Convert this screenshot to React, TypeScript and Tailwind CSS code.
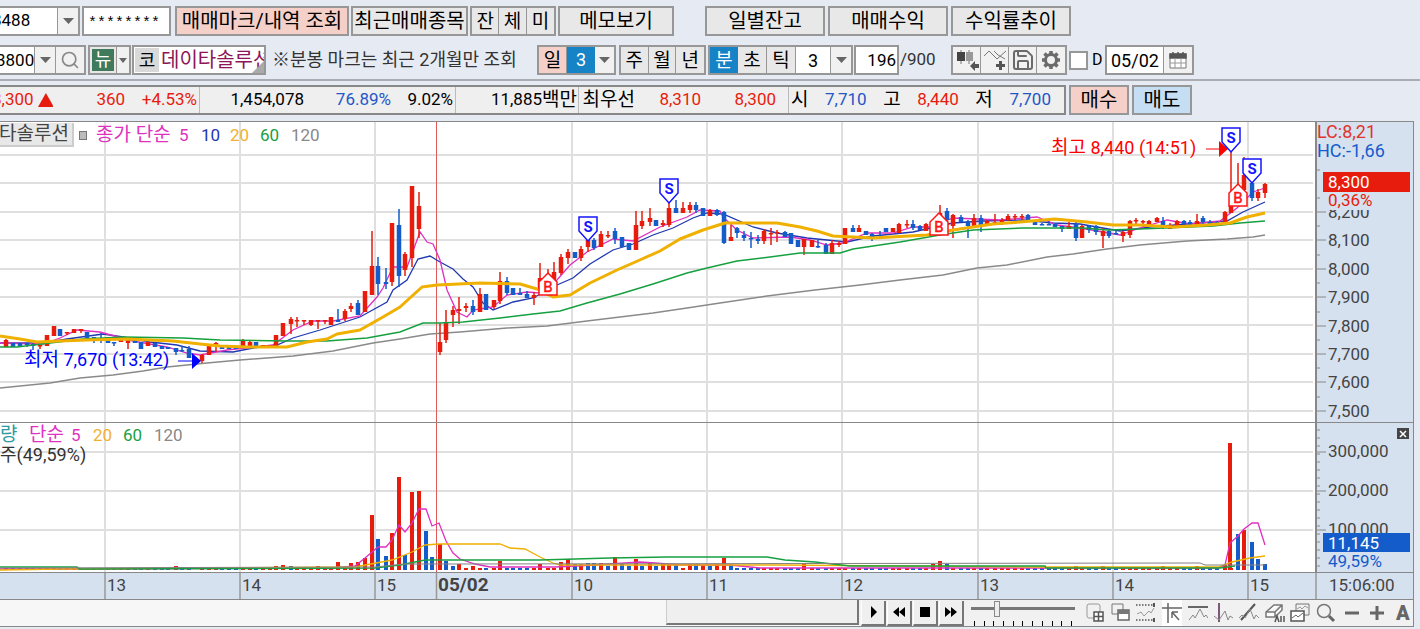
import React from 'react';
import { Search, Save } from 'lucide-react';

type Tone = 'r' | 'b';
// x, high, body top, body bottom, low, direction
type Candle = [number, number, number, number, number, Tone];

const RED = '#e81c0c';
const BLUE = '#155ccb';

const candles: Candle[] = [
  [6, 339, 340, 347, 347, 'r'], [13, 343, 343, 347, 347, 'b'], [20, 343, 343, 346, 346, 'b'], [27, 343, 343, 345, 347, 'b'],
  [33, 343, 344, 346, 350, 'b'], [40, 345, 345, 346, 349, 'r'], [47, 335, 335, 346, 346, 'r'], [54, 326, 326, 336, 336, 'r'],
  [60, 329, 329, 336, 336, 'b'], [67, 332, 332, 333, 335, 'r'], [74, 329, 329, 333, 333, 'r'], [81, 329, 329, 331, 333, 'r'],
  [87, 332, 332, 338, 338, 'b'], [94, 337, 337, 338, 343, 'b'], [101, 333, 338, 339, 343, 'b'], [108, 337, 337, 343, 343, 'b'],
  [114, 342, 342, 343, 346, 'b'], [121, 338, 338, 342, 342, 'r'], [128, 338, 339, 343, 349, 'r'], [135, 340, 340, 343, 343, 'b'],
  [141, 342, 342, 349, 349, 'b'], [148, 342, 342, 346, 346, 'r'], [155, 343, 343, 347, 347, 'b'], [162, 346, 346, 349, 349, 'b'],
  [168, 347, 347, 349, 349, 'b'], [176, 348, 348, 352, 355, 'b'], [182, 346, 350, 351, 352, 'b'], [189, 346, 349, 358, 358, 'b'],
  [202, 354, 355, 361, 363, 'r'], [209, 345, 345, 355, 355, 'r'], [216, 342, 343, 344, 352, 'r'], [222, 346, 346, 349, 349, 'b'],
  [229, 346, 346, 349, 349, 'b'], [236, 346, 346, 349, 349, 'b'], [243, 339, 340, 347, 347, 'r'], [250, 340, 342, 347, 347, 'r'],
  [256, 342, 342, 348, 348, 'b'], [263, 345, 345, 348, 348, 'r'], [270, 345, 345, 348, 348, 'r'], [276, 335, 335, 346, 346, 'r'],
  [283, 323, 323, 336, 336, 'r'], [291, 317, 319, 324, 334, 'r'], [297, 317, 320, 321, 327, 'r'], [304, 320, 320, 321, 325, 'r'],
  [311, 320, 320, 325, 326, 'r'], [318, 320, 320, 321, 329, 'r'], [325, 320, 320, 321, 324, 'r'], [331, 317, 317, 325, 325, 'r'],
  [338, 309, 320, 322, 322, 'b'], [345, 309, 311, 319, 321, 'r'], [351, 303, 306, 309, 312, 'r'], [358, 300, 303, 315, 315, 'b'],
  [365, 291, 291, 312, 312, 'r'], [372, 231, 266, 295, 295, 'r'], [378, 257, 266, 284, 295, 'b'], [386, 268, 282, 284, 289, 'b'],
  [392, 223, 223, 282, 286, 'r'], [399, 209, 225, 276, 287, 'b'], [405, 252, 254, 270, 276, 'r'], [412, 186, 186, 258, 267, 'r'],
  [419, 192, 206, 229, 238, 'r'],
  [440, 323, 342, 352, 355, 'r'], [446, 310, 322, 340, 343, 'r'], [453, 306, 310, 315, 327, 'r'], [459, 297, 309, 311, 324, 'r'],
  [466, 303, 306, 308, 312, 'r'], [473, 300, 306, 312, 315, 'b'], [480, 288, 294, 312, 312, 'r'], [486, 294, 294, 310, 310, 'b'],
  [494, 300, 300, 307, 309, 'r'], [500, 272, 281, 301, 304, 'r'], [507, 277, 281, 293, 295, 'b'], [513, 288, 288, 295, 295, 'b'],
  [520, 288, 293, 295, 295, 'b'], [527, 291, 294, 298, 298, 'b'], [534, 292, 295, 298, 305, 'r'], [540, 263, 278, 291, 291, 'r'],
  [548, 269, 274, 280, 280, 'r'], [554, 262, 272, 280, 280, 'r'], [561, 254, 257, 273, 275, 'r'], [568, 249, 252, 258, 264, 'r'],
  [575, 252, 252, 258, 258, 'b'], [581, 246, 249, 258, 261, 'r'], [588, 238, 240, 247, 252, 'r'], [594, 238, 240, 248, 250, 'b'],
  [601, 231, 234, 247, 247, 'r'], [608, 231, 235, 236, 238, 'r'], [615, 228, 231, 239, 244, 'b'], [622, 237, 237, 247, 247, 'b'],
  [629, 243, 243, 250, 250, 'b'], [636, 211, 225, 250, 250, 'r'], [642, 211, 221, 226, 229, 'r'], [650, 208, 218, 222, 226, 'r'],
  [656, 220, 220, 226, 226, 'b'], [663, 220, 223, 225, 227, 'r'], [669, 202, 208, 225, 227, 'r'], [676, 200, 208, 213, 213, 'b'],
  [683, 202, 208, 213, 213, 'r'], [690, 202, 205, 210, 213, 'r'], [696, 202, 205, 210, 213, 'b'], [703, 208, 208, 216, 216, 'b'],
  [710, 209, 210, 216, 216, 'r'], [717, 209, 210, 215, 216, 'b'], [724, 211, 212, 243, 244, 'b'], [731, 225, 237, 241, 241, 'r'],
  [737, 227, 228, 233, 238, 'b'], [744, 231, 235, 238, 241, 'b'], [751, 232, 238, 239, 248, 'b'], [758, 235, 239, 241, 244, 'b'],
  [764, 229, 231, 241, 244, 'r'], [771, 228, 233, 234, 245, 'r'], [777, 230, 232, 233, 242, 'r'], [785, 231, 232, 237, 237, 'b'],
  [791, 233, 233, 244, 244, 'b'], [798, 240, 240, 247, 247, 'b'], [804, 239, 239, 247, 255, 'r'], [812, 240, 240, 247, 247, 'r'],
  [818, 240, 246, 247, 248, 'b'], [826, 243, 245, 254, 254, 'b'], [832, 240, 243, 254, 254, 'r'], [839, 241, 243, 245, 247, 'r'],
  [845, 228, 228, 244, 244, 'r'], [853, 225, 228, 232, 232, 'b'], [859, 225, 228, 232, 232, 'r'], [866, 231, 231, 235, 235, 'b'],
  [872, 233, 234, 238, 241, 'b'], [880, 231, 237, 238, 239, 'b'], [886, 228, 228, 232, 232, 'b'], [893, 228, 228, 232, 232, 'r'],
  [899, 223, 224, 233, 233, 'r'], [907, 220, 224, 225, 228, 'r'], [913, 220, 224, 228, 230, 'b'], [920, 225, 226, 230, 230, 'b'],
  [926, 223, 224, 231, 231, 'r'], [933, 224, 225, 230, 230, 'r'], [940, 205, 213, 225, 228, 'r'], [947, 208, 211, 220, 222, 'b'],
  [953, 214, 215, 226, 238, 'r'], [961, 215, 217, 222, 222, 'b'], [968, 220, 221, 226, 238, 'b'], [974, 214, 218, 226, 228, 'r'],
  [981, 215, 218, 226, 232, 'b'], [987, 220, 221, 226, 226, 'r'], [995, 214, 222, 223, 225, 'r'], [1002, 218, 220, 222, 225, 'r'],
  [1008, 214, 216, 220, 221, 'r'], [1015, 214, 216, 217, 220, 'r'], [1022, 214, 216, 217, 220, 'r'], [1028, 214, 215, 220, 221, 'b'],
  [1035, 220, 221, 225, 225, 'b'], [1042, 223, 224, 225, 225, 'b'], [1049, 221, 224, 225, 225, 'b'], [1055, 223, 224, 227, 227, 'b'],
  [1062, 226, 226, 229, 232, 'b'], [1069, 222, 226, 229, 229, 'r'], [1076, 222, 224, 238, 241, 'b'], [1082, 225, 226, 238, 238, 'r'],
  [1089, 225, 226, 230, 233, 'b'], [1096, 225, 226, 232, 235, 'b'], [1103, 228, 231, 236, 248, 'r'], [1109, 230, 231, 236, 238, 'b'],
  [1116, 231, 233, 234, 235, 'b'], [1123, 231, 232, 236, 242, 'r'], [1130, 220, 221, 235, 238, 'r'], [1136, 218, 220, 221, 225, 'r'],
  [1143, 220, 221, 222, 227, 'r'], [1149, 220, 221, 225, 225, 'r'], [1157, 217, 218, 222, 222, 'r'], [1163, 217, 221, 228, 229, 'b'],
  [1170, 223, 225, 229, 229, 'r'], [1177, 220, 221, 226, 227, 'r'], [1184, 220, 221, 224, 224, 'b'], [1190, 220, 222, 226, 226, 'b'],
  [1197, 214, 221, 226, 227, 'r'], [1203, 216, 218, 222, 224, 'b'], [1210, 220, 222, 224, 225, 'b'], [1217, 221, 222, 225, 225, 'b'],
  [1225, 211, 212, 223, 223, 'r'], [1231, 152, 206, 213, 213, 'r'], [1238, 163, 186, 200, 200, 'r'], [1244, 157, 175, 190, 190, 'r'],
  [1252, 182, 183, 198, 201, 'b'], [1258, 189, 192, 198, 201, 'r'], [1265, 183, 184, 193, 198, 'r'],
];

// tops of the volume bars that rise above the floor, [x, top, colour]
const spikes: [number, number, Tone][] = [
  [176, 566, 'r'], [276, 566, 'r'], [283, 565, 'r'], [291, 566, 'b'], [318, 566, 'r'], [338, 562, 'r'], [351, 563, 'r'],
  [358, 562, 'r'], [365, 558, 'r'], [372, 515, 'r'], [378, 539, 'b'], [386, 556, 'b'], [392, 533, 'r'], [399, 477, 'r'],
  [405, 555, 'b'], [412, 492, 'r'], [419, 491, 'r'], [426, 531, 'b'], [432, 557, 'b'], [440, 544, 'r'], [446, 561, 'b'],
  [453, 566, 'b'], [459, 564, 'r'], [473, 566, 'r'], [500, 561, 'r'], [540, 564, 'r'], [561, 562, 'r'], [568, 559, 'r'],
  [575, 564, 'b'], [581, 564, 'r'], [588, 563, 'b'], [594, 563, 'b'], [601, 563, 'r'], [608, 566, 'b'], [615, 557, 'r'],
  [622, 564, 'b'], [629, 566, 'b'], [636, 559, 'r'], [642, 566, 'b'], [650, 562, 'r'], [656, 566, 'b'], [663, 563, 'r'],
  [669, 564, 'r'], [676, 564, 'b'], [690, 564, 'r'], [696, 564, 'b'], [703, 565, 'r'], [710, 566, 'b'], [717, 564, 'r'],
  [724, 558, 'r'], [731, 565, 'b'], [804, 564, 'r'], [933, 564, 'r'], [940, 561, 'r'], [947, 564, 'b'], [1076, 566, 'r'],
  [1103, 566, 'r'], [1163, 566, 'r'], [1197, 566, 'r'], [1225, 565, 'r'], [1230, 443, 'r'], [1238, 534, 'b'],
  [1244, 530, 'r'], [1252, 542, 'b'], [1258, 559, 'b'], [1265, 564, 'b'],
];

const ma120 =
  '0,388 50,383 80,378 113,375 143,371 167,367 207,363 240,360 293,356 333,351 373,343 400,339 430,334 460,332 507,328 547,326 587,321 620,317 653,313 687,308 720,303 767,296 815,290 860,285 900,280 943,275 977,268 1007,265 1047,257 1073,254 1107,249 1140,245 1187,241 1227,239 1253,237 1265,235';
const ma60 =
  '0,347 17,347 50,343 83,339 123,337 183,338 220,340 287,341 327,341 367,338 400,332 423,323 440,323 463,322 500,318 533,314 560,311 587,303 620,294 653,284 687,273 707,268 737,261 770,257 800,253 840,253 853,249 900,242 940,235 973,230 1023,228 1083,228 1107,230 1140,229 1213,226 1240,223 1265,221';
const ma20 =
  '0,336 20,339 37,342 60,341 87,340 127,339 173,341 200,344 220,346 247,347 287,347 307,342 327,339 337,334 360,330 383,317 400,307 422,287 437,285 480,283 520,284 537,289 553,297 570,295 590,283 617,270 633,263 660,251 680,239 703,230 725,223 777,223 800,227 817,231 833,236 873,238 927,235 953,230 993,224 1020,222 1055,219 1087,222 1113,225 1140,225 1173,227 1207,225 1230,223 1247,217 1265,213';
const ma10 =
  '0,343 43,343 67,339 103,334 123,337 150,342 177,345 200,351 233,352 253,348 277,345 293,338 320,330 360,317 387,302 393,290 407,280 418,259 430,256 440,262 453,269 463,279 473,287 483,303 493,310 513,302 533,298 557,285 573,278 590,264 613,250 633,244 653,235 673,228 693,218 707,213 723,214 753,227 777,233 807,238 847,242 873,236 913,232 953,223 983,221 1023,220 1053,223 1080,224 1097,227 1120,231 1150,227 1200,223 1227,221 1243,212 1265,202';
const ma5 =
  '0,343 43,344 60,338 77,330 100,332 133,341 167,347 187,353 200,355 227,350 273,345 293,330 313,321 333,321 360,316 377,297 383,288 393,267 407,267 420,232 427,242 433,244 440,260 447,290 457,312 467,317 473,310 493,307 507,295 527,292 540,293 557,280 570,265 587,252 613,239 633,241 660,227 687,217 700,210 720,211 723,217 737,230 753,238 790,237 810,240 827,245 843,243 867,233 893,233 913,227 930,227 953,218 1000,220 1037,217 1057,225 1080,228 1103,232 1120,235 1140,228 1167,220 1190,224 1220,221 1237,208 1253,192 1265,188';

const hours = [
  { x: 105, label: '13' }, { x: 240, label: '14' }, { x: 375, label: '15' }, { x: 572, label: '10' }, { x: 707, label: '11' },
  { x: 842, label: '12' }, { x: 978, label: '13' }, { x: 1113, label: '14' }, { x: 1248, label: '15' },
];
const prices = ['8,200', '8,100', '8,000', '7,900', '7,800', '7,700', '7,600', '7,500'];

const button = 'h-[30px] shrink-0 border-2 border-[#979797] text-[20px] leading-none text-black whitespace-nowrap';
const segment = 'h-full w-[29px] border-r border-[#979797] last:border-r-0 text-[19px] leading-none text-black';
const group = 'flex h-[30px] shrink-0 border-2 border-[#979797] bg-[#e8e8e8]';
const iconBtn = 'flex h-full w-7 items-center justify-center border-r border-[#979797] bg-[#f1f1f1] last:border-r-0';

function Arrow() {
  return (
    <svg className="h-[6px] w-[11px]" viewBox="0 0 11 6">
      <path d="M0 0h11L5.500 6z" fill="#666" />
    </svg>
  );
}

function Combo({ value, label, className }: { value: string; label: string; className: string }) {
  return (
    <div className={`relative flex h-[30px] shrink-0 border-2 border-[#979797] bg-white ${className}`}>
      <select aria-label={label} defaultValue={value} className="h-full w-full appearance-none bg-transparent pl-2 text-[17px] text-black">
        <option>{value}</option>
      </select>
      <span className="pointer-events-none absolute inset-y-0 right-0 flex w-[21px] items-center justify-center border-l border-[#979797] bg-[#f1f1f1]">
        <Arrow />
      </span>
    </div>
  );
}

function TopRow() {
  return (
    <div className="flex items-center pt-[6px]">
      <Combo label="계좌" value="8488" className="-ml-[18px] w-[98px]" />
      <input
        aria-label="비밀번호"
        defaultValue="********"
        className="ml-[2px] h-[30px] w-[89px] shrink-0 border-2 border-[#979797] bg-white px-1 pt-1 font-['Liberation_Mono',monospace] text-[15px]"
      />
      <button className={`${button} ml-1 w-[174px] bg-[#f5d0c9]`}>매매마크/내역 조회</button>
      <button className={`${button} ml-[2px] w-[117px] bg-[#e8e8e8]`}>최근매매종목</button>
      <div className={`${group} ml-[2px] w-[86px]`}>
        <button className={segment}>잔</button>
        <button className={segment}>체</button>
        <button className={segment}>미</button>
      </div>
      <button className={`${button} ml-[2px] w-[116px] bg-[#e8e8e8]`}>메모보기</button>
      <button className={`${button} ml-[31px] w-[120px] bg-[#e8e8e8]`}>일별잔고</button>
      <button className={`${button} ml-[3px] w-[120px] bg-[#e8e8e8]`}>매매수익</button>
      <button className={`${button} ml-[3px] w-[120px] bg-[#e8e8e8]`}>수익률추이</button>
    </div>
  );
}

function SecondRow() {
  return (
    <div className="flex items-center pt-[9px] pb-1">
      <div className={`${group} -ml-[13px]`}>
        <input aria-label="종목코드" defaultValue="3800" className="h-full w-[46px] border-r border-[#979797] bg-white pl-[7px] text-[17px]" />
        <button aria-label="종목코드 목록" className="flex h-full w-[21px] items-center justify-center border-r border-[#979797] bg-[#f1f1f1]"><Arrow /></button>
        <button aria-label="검색" className={iconBtn}><Search className="h-5 w-5 text-[#888]" strokeWidth={2} /></button>
      </div>
      <div className={`${group} ml-[2px] w-[43px]`}>
        <button className="m-[2px] h-[22px] w-[22px] shrink-0 bg-[#3f7a5c] text-[18px] leading-none text-white">뉴</button>
        <button aria-label="뉴스 목록" className="flex w-full items-center justify-center border-l border-[#979797] bg-[#f1f1f1]">
          <svg className="h-[5px] w-2" viewBox="0 0 8 5"><path d="M0 0h8L4 5z" fill="#666" /></svg>
        </button>
      </div>
      <div className="relative ml-[1px] flex h-[30px] w-[134px] shrink-0 items-center overflow-hidden border-2 border-[#979797] bg-white">
        <span className="ml-[1px] flex h-6 w-6 shrink-0 items-center justify-center bg-[#d9d9d9] text-[18px]">코</span>
        <span className="ml-[2px] text-[20px] whitespace-nowrap text-[#8c1657]">데이타솔루션</span>
        <svg className="absolute right-0 bottom-0 h-3 w-3" viewBox="0 0 12 12"><path d="M12 0v12H0z" fill="#aaa" /></svg>
      </div>
      <span className="ml-[6px] w-[246px] shrink-0 text-[18px] leading-6 whitespace-nowrap text-[#333]">※분봉 마크는 최근 2개월만 조회</span>

      <div className={`${group} ml-[19px] w-[79px]`}>
        <button className="h-full w-7 border-r border-[#979797] bg-[#f5d0c9] text-[19px] leading-none">일</button>
        <button className="h-full w-7 bg-[#1583c5] text-[18px] leading-none text-white">3</button>
        <button aria-label="일 주기" className="flex h-full flex-1 items-center justify-center bg-[#f1f1f1]"><Arrow /></button>
      </div>
      <div className={`${group} ml-[3px] w-[87px]`}>
        <button className={segment}>주</button>
        <button className={segment}>월</button>
        <button className={segment}>년</button>
      </div>
      <div className={`${group} ml-[2px] w-[145px]`}>
        <button className="h-full w-7 bg-[#1583c5] text-[19px] leading-none text-white">분</button>
        <button className={segment}>초</button>
        <button className={segment}>틱</button>
        <input aria-label="분 주기" defaultValue="3" className="h-full w-[34px] min-w-0 bg-white text-center text-[18px]" />
        <button aria-label="분 주기 목록" className="flex h-full flex-1 items-center justify-center border-l border-[#979797] bg-[#f1f1f1]"><Arrow /></button>
      </div>
      <input aria-label="봉 개수" defaultValue="196" className="ml-[1px] h-[30px] w-[45px] shrink-0 border-2 border-[#979797] bg-white pr-[1px] text-right text-[17px]" />
      <span className="w-[52px] shrink-0 pl-[1px] text-[17px] text-[#333]">/900</span>

      <div className={group}>
        <button aria-label="캔들 이동" className={iconBtn}>
          <svg className="h-6 w-6" viewBox="0 0 24 24">
            <path d="M6 2v14M14 2v14" stroke="#777" />
            <path d="M2 4h8v9H2z" fill="#444" />
            <path d="M11 4h7v9h-7z" fill="#999" />
            <path d="M15 18l5-5v3h4v4h-4v3z" fill="#555" />
          </svg>
        </button>
        <button aria-label="지표 추가" className={iconBtn}>
          <svg className="h-6 w-6" viewBox="0 0 24 24" fill="none">
            <path d="M1 8l5-5 4 4 4 4 9-8M11 3l4 4 7 4" stroke="#777" />
            <path d="M17.500 13v9M13 17.500h9" stroke="#555" strokeWidth="3" />
          </svg>
        </button>
        <button aria-label="저장" className={iconBtn}><Save className="h-6 w-6 text-[#6b6b6b]" strokeWidth={2} /></button>
        <button aria-label="설정" className={iconBtn}>
          <svg className="h-5 w-5" viewBox="0 0 20 20" fill="none" stroke="#6b6b6b">
            <circle cx="10" cy="10" r="5.500" strokeWidth="3" />
            <path d="M10 1v3M10 16v3M1 10h3M16 10h3M3.500 3.500l2.500 2.500M14 14l2.500 2.500M3.500 16.500l2.500-2.500M14 6l2.500-2.500" strokeWidth="3.500" />
          </svg>
        </button>
      </div>
      <label className="ml-[2px] flex shrink-0 items-center">
        <input type="checkbox" className="h-[19px] w-[19px] appearance-none border-2 border-[#979797] bg-white" />
        <span className="ml-1 w-[13px] text-[16px]">D</span>
      </label>
      <div className={group}>
        <input aria-label="날짜" defaultValue="05/02" className="h-full w-[57px] border-r border-[#979797] bg-white pl-1 text-[18px]" />
        <button aria-label="달력" className={iconBtn}>
          <svg className="h-[18px] w-[18px]" viewBox="0 0 18 18" fill="none">
            <path d="M1 3h16v14H1z" fill="#fff" stroke="#777" />
            <path d="M1 3h16v4H1zM4 1v3M9 1v3M14 1v3" fill="#555" stroke="#555" strokeWidth="1.500" />
            <path d="M1 12h16M6 7v10M12 7v10" stroke="#999" />
          </svg>
        </button>
      </div>
    </div>
  );
}

function InfoRow() {
  const cell = 'flex h-full shrink-0 items-center justify-end border-r border-[#bbb]';
  const ko = 'text-[19px]';
  return (
    <div className="flex border-t-2 border-[#a9adb3] pt-1 pb-[6px]">
      <div className="flex h-[30px] w-[1066px] shrink-0 items-center border-y-2 border-r-2 border-[#888] bg-[#efefef] text-[17px]">
        <div className={`${cell} -ml-[8px] w-[208px] pr-[2px] text-[#e81c0c]`}>
          <span>8,300</span>
          <svg className="ml-1 h-[14px] w-4" viewBox="0 0 16 14"><path d="M8 0l8 14H0z" fill={RED} /></svg>
          <span className="w-[73px] text-right">360</span>
          <span className="w-[73px] text-right">+4.53%</span>
        </div>
        <div className={`${cell} w-[256px] pr-[2px]`}>
          <span>1,454,078</span>
          <span className="w-[87px] text-right text-[#2456c8]">76.89%</span>
          <span className="w-[62px] text-right">9.02%</span>
        </div>
        <div className={`${cell} w-[123px] pr-[1px]`}>
          11,885<span className={ko}>백만</span>
        </div>
        <div className={`${cell} w-[210px] pr-3`}>
          <span className={ko}>최우선</span>
          <span className="w-[66px] text-right text-[#e81c0c]">8,310</span>
          <span className="w-[75px] text-right text-[#e81c0c]">8,300</span>
        </div>
        <div className="flex h-full flex-1 items-center justify-between pr-[13px] pl-[2px]">
          <span className={ko}>시</span>
          <span className="text-[#2456c8]">7,710</span>
          <span className={ko}>고</span>
          <span className="text-[#e81c0c]">8,440</span>
          <span className={ko}>저</span>
          <span className="text-[#2456c8]">7,700</span>
        </div>
      </div>
      <button className={`${button} ml-[3px] w-[60px] bg-[#f5d0c9]`}>매수</button>
      <button className={`${button} ml-[3px] w-[60px] bg-[#c6def4]`}>매도</button>
    </div>
  );
}

function SellMark({ x, y }: { x: number; y: number }) {
  return (
    <g>
      <path d={`M${x - 9} ${y}h18v14l-9 10l-9-10z`} fill="#fff" stroke="#1414ff" strokeWidth="1.500" />
      <text x={x} y={y + 15} textAnchor="middle" fontSize="15" fontWeight="700" fill="#1414ff">S</text>
    </g>
  );
}

function BuyMark({ x, y }: { x: number; y: number }) {
  return (
    <g>
      <path d={`M${x} ${y}l9 9v13h-18v-13z`} fill="#fff" stroke="#ff1414" strokeWidth="1.500" />
      <text x={x} y={y + 19} textAnchor="middle" fontSize="15" fill="#ff1414" stroke="#ff1414" strokeWidth="0.500">B</text>
    </g>
  );
}

function Grid({ rows, top, bottom }: { rows: number[]; top: number; bottom: number }) {
  return (
    <g stroke="#dfdfdf" strokeWidth="2">
      {rows.map((y) => <line key={y} x1="0" x2="1313" y1={y} y2={y} />)}
      {hours.map((h) => <line key={h.x} x1={h.x} x2={h.x} y1={top} y2={bottom} />)}
    </g>
  );
}

function PricePlot() {
  const rows = Array.from({ length: 10 }, (_, i) => Math.round(155 + i * 28.4));
  return (
    <svg className="block h-auto w-full bg-white" viewBox="0 122 1315 300" fill="none">
      <Grid rows={rows} top={122} bottom={422} />
      <line x1="436.500" x2="436.500" y1="122" y2="422" stroke="#e05a5a" />
      <polyline points={ma120} stroke="#8a8a8a" strokeWidth="1.500" />
      <polyline points={ma10} stroke="#2038b0" strokeWidth="1.300" />
      <polyline points={ma5} stroke="#e030c0" strokeWidth="1.300" />
      {candles.map(([x, high, top, bottom, low, tone]) => (
        <g key={x} fill={tone === 'r' ? RED : BLUE}>
          <rect x={x - 0.75} y={high} width="1.500" height={low - high} />
          <rect x={x - 2.25} y={top} width="4.500" height={Math.max(bottom - top, 1.5)} />
        </g>
      ))}
      <polyline points={ma60} stroke="#16a040" strokeWidth="1.500" />
      <polyline points={ma20} stroke="#f0b000" strokeWidth="3" strokeLinejoin="round" />

      <text x="24" y="366" fontSize="18" fill="#0000ff"><tspan fontSize="19">최저</tspan> 7,670 (13:42)</text>
      <path d="M178 361h15" stroke="#0000ff" />
      <path d="M192 353l9 8l-9 8z" fill="#0000ff" />
      <text x="1051" y="154" fontSize="18" fill="#ff0000"><tspan fontSize="19">최고</tspan> 8,440 (14:51)</text>
      <path d="M1206 149h14" stroke="#ff0000" />
      <path d="M1219 141l9 8l-9 8z" fill="#ff0000" />

      <SellMark x={588} y={217} />
      <SellMark x={669} y={179} />
      <SellMark x={1231} y={128} />
      <BuyMark x={548} y={273} />
      <BuyMark x={939} y={213} />
      <BuyMark x={1238} y={184} />
      <SellMark x={1252} y={159} />
    </svg>
  );
}

function VolumePlot() {
  const tall = new Set(spikes.map((s) => s[0]));
  return (
    <svg className="block h-auto w-full bg-white" viewBox="0 423 1315 149" fill="none">
      <Grid rows={[452, 491, 530]} top={423} bottom={572} />
      <line x1="436.500" x2="436.500" y1="423" y2="572" stroke="#e05a5a" />
      {candles.filter((c) => !tall.has(c[0])).map((c) => (
        <rect key={c[0]} x={c[0] - 2} y="568" width="4" height="2" fill={c[5] === 'r' ? RED : BLUE} />
      ))}
      {spikes.map(([x, top, tone]) => (
        <rect key={x} x={x - 2} y={top} width="4" height={570 - top} fill={tone === 'r' ? RED : BLUE} />
      ))}
      <polyline points="0,569 52,569 333,568 355,566 365,558 378,547 386,547 392,540 399,525 405,532 412,523 419,509 426,509 432,526 439,523 446,541 453,553 460,559 475,564 490,567 555,567 595,565 640,562 655,563 680,565 730,565 760,568 1218,568 1225,565 1230,543 1238,536 1244,529 1252,523 1258,523 1265,545" stroke="#e030c0" strokeWidth="1.300" />
      <polyline points="0,570 60,569 355,567 392,560 412,552 425,545 439,544 500,544 510,548 525,549 540,557 553,563 560,565 775,565 1040,567 1218,567 1232,562 1250,558 1265,556" stroke="#f0b000" strokeWidth="1.300" />
      <polyline points="0,567 77,567 79,569 375,568 400,565 425,560 540,560 610,558 667,557 767,557 785,560 815,562 850,566 1045,566 1046,568 1220,568 1235,566" stroke="#16a040" strokeWidth="1.500" />
      <polyline points="0,568 375,567 405,564 450,564 1200,563 1205,565 1265,565" stroke="#808080" />
    </svg>
  );
}

function PriceAxis() {
  return (
    <svg className="block h-auto w-full bg-[#d6e1ef]" viewBox="1315 122 98 300" fontSize="17" fill="#444">
      <line x1="1316" x2="1316" y1="122" y2="422" stroke="#888" strokeWidth="2" />
      {prices.map((p, i) => (
        <g key={p}>
          <path d={`M1316 ${212 + Math.round(i * 28.4)}h10M1316 ${198 + Math.round(i * 28.4)}h4`} stroke="#888" />
          <text x="1328" y={218 + Math.round(i * 28.4)}>{p}</text>
        </g>
      ))}
      <path d="M1316 170h4" stroke="#888" />
      <rect x="1320" y="192" width="92" height="18" fill="#d6e1ef" />
      <rect x="1323" y="172" width="87" height="20" fill={RED} />
      <text x="1328" y="188" fill="#fff">8,300</text>
      <text x="1328" y="206" fill={RED}>0,36%</text>
      <text x="1317" y="138" fontSize="18" fill="#e0352c">LC:8,21</text>
      <text x="1317" y="157" fontSize="18" fill="#155ccb">HC:-1,66</text>
    </svg>
  );
}

function VolumeAxis() {
  return (
    <svg className="block h-auto w-full bg-[#d6e1ef]" viewBox="1315 423 98 149" fontSize="17" fill="#444">
      <line x1="1316" x2="1316" y1="423" y2="572" stroke="#888" strokeWidth="2" />
      {Array.from({ length: 18 }, (_, i) => (
        <line key={i} x1="1316" x2="1320" y1={430 + i * 8} y2={430 + i * 8} stroke="#888" />
      ))}
      {['300,000', '200,000', '100,000'].map((v, i) => (
        <g key={v}>
          <path d={`M1316 ${452 + i * 39}h10`} stroke="#888" />
          <text x="1328" y={457 + i * 39}>{v}</text>
        </g>
      ))}
      <rect x="1323" y="533" width="87" height="19" fill={BLUE} />
      <text x="1328" y="549" fill="#fff">11,145</text>
      <text x="1328" y="567" fill={BLUE}>49,59%</text>
    </svg>
  );
}

function Chart() {
  return (
    <div className="mr-[6px] border-t border-r border-[#888]">
      <div className="grid grid-cols-[1315fr_98fr]">
        <div className="relative">
          <PricePlot />
          <div className="absolute top-[1px] left-0 flex items-center text-[17px] leading-[22px] whitespace-nowrap">
            <span className="-ml-[1px] w-[75px] border-r-2 border-b-2 border-[#ccc] bg-[#e8e8e8] text-[19px] text-[#444]">타솔루션</span>
            <i className="ml-[5px] h-[9px] w-2 border border-[#777] bg-[#bbb]" />
            <span className="ml-[9px] w-[83px] text-[19px] text-[#e030c0]">종가 단순</span>
            <span className="w-[22px] text-[#e030c0]">5</span>
            <span className="w-[29px] text-[#2038b0]">10</span>
            <span className="w-[30px] text-[#f0b030]">20</span>
            <span className="w-[31px] text-[#16a040]">60</span>
            <span className="text-[#888]">120</span>
          </div>
        </div>
        <PriceAxis />
      </div>
      <div className="grid grid-cols-[1315fr_98fr] border-t border-[#888]">
        <div className="relative">
          <VolumePlot />
          <div className="absolute top-[2px] left-0 text-[17px] leading-5 whitespace-nowrap">
            <div className="flex items-center">
              <span className="w-[29px] text-[19px] text-[#309aa0]">량</span>
              <span className="w-[42px] text-[19px] text-[#e030c0]">단순</span>
              <span className="w-[22px] text-[#e030c0]">5</span>
              <span className="w-[30px] text-[#f0b030]">20</span>
              <span className="w-[31px] text-[#16a040]">60</span>
              <span className="text-[#888]">120</span>
            </div>
            <div className="text-[18px] text-[#333]">주(49,59%)</div>
          </div>
        </div>
        <div className="relative">
          <VolumeAxis />
          <button aria-label="닫기" className="absolute top-[5px] right-1 flex h-[11px] w-3 items-center justify-center bg-[#444]">
            <svg className="h-2 w-2" viewBox="0 0 8 8"><path d="M1 1l6 6M7 1l-6 6" stroke="#fff" strokeWidth="1.500" /></svg>
          </button>
        </div>
      </div>
      <svg className="block h-auto w-full border-y border-[#888] bg-[#d6e1ef]" viewBox="0 573 1413 26" fontSize="17" fill="#444">
        {hours.map((h) => (
          <g key={h.x}>
            <line x1={h.x} x2={h.x} y1="573" y2="599" stroke="#999" strokeWidth="1.500" />
            <text x={h.x + 2} y="591">{h.label}</text>
          </g>
        ))}
        <path d="M436.500 573v26M1316 573v26" stroke="#999" strokeWidth="1.500" />
        <text x="438" y="591" fontSize="19" fontWeight="700">05/02</text>
        <text x="1329" y="591">15:06:00</text>
      </svg>
    </div>
  );
}

const tools: { name: string; active?: boolean; art: React.ReactNode }[] = [
  { name: '차트 추가', art: <><rect x="2" y="1" width="13" height="14" rx="2" stroke="#999" /><path d="M9 9h9v9H9zM13.500 9v9M9 13.500h9" fill="#fff" stroke="#555" strokeWidth="1.500" /></> },
  { name: '차트 겹치기', art: <><path d="M1 1h11v10H1z" stroke="#777" /><path d="M7 7h11v10H7z" fill="#fff" stroke="#666" strokeWidth="1.500" /><path d="M7 7h11v4H7z" fill="#777" /></> },
  { name: '구간 표시', art: <><path d="M0 2h18M0 17h18" stroke="#555" strokeWidth="1.500" strokeDasharray="1.500 1.500" /><path d="M1 11l4-2 3 4 5-5 2 2 3-5" stroke="#999" /><path d="M18 0v4M18 15v4" stroke="#555" strokeWidth="2" /></> },
  { name: '선택', active: true, art: <><path d="M0 5h20M6 0v20" stroke="#666" strokeWidth="1.500" /><path d="M10 9l7 8M10 9h6M10 9v6" stroke="#666" strokeWidth="1.500" /></> },
  { name: '수평선', art: <><path d="M0 4h20" stroke="#666" strokeWidth="2" /><path d="M1 17l4-5 2 3 5-9 4 8 2-2 2 3" stroke="#888" /></> },
  { name: '수직선', art: <><path d="M6 0v19" stroke="#7a5a7a" strokeWidth="2" /><path d="M1 13l5 4 6-9 3 9 2-4 3 2" stroke="#888" /></> },
  { name: '추세선', art: <><path d="M2 17L16 1" stroke="#555" strokeWidth="2" /><path d="M0 15l3-3 3 3 5-9 4 10 2-4 3 3" stroke="#888" /></> },
  { name: '지우기', art: <><path d="M1 9l8-7h8v5l-7 7H1zM1 9h9l7-7M10 9v5" fill="#fff" stroke="#777" strokeWidth="1.500" /><path d="M10 19l2-6 2 6M16 13v6M19 13v6" stroke="#555" strokeWidth="1.500" /></> },
  { name: '차트 복사', art: <><path d="M6 1h13v11H6z" stroke="#777" /><path d="M7 6l3-2 2 2 3-3 3 2" stroke="#999" /><path d="M1 8h13v10H1z" fill="#fff" stroke="#555" strokeWidth="1.500" /><path d="M2 15l4-3 2 2 5-4" stroke="#666" /></> },
  { name: '돋보기', art: <><circle cx="8" cy="8" r="6.500" stroke="#777" strokeWidth="1.500" /><path d="M13 13l5 5" stroke="#666" strokeWidth="3" /></> },
  { name: '축소', art: <path d="M3 10h14" stroke="#666" strokeWidth="3" /> },
  { name: '확대', art: <path d="M3 10h14M10 3v14" stroke="#666" strokeWidth="3" /> },
];

function BottomBar() {
  const play = 'flex h-[25px] w-[25px] items-center justify-center border-r-2 border-b-2 border-l border-r-[#777] border-b-[#777] border-l-white bg-[#efefef]';
  return (
    <div className="mr-[6px] flex h-[27px] items-center border-r border-b border-[#888] bg-[#f1f1f1]">
      <div className="flex h-full flex-1 justify-end bg-[#f7f7f7]">
        <div className="h-[25px] w-[193px] border-r-2 border-b-2 border-l border-r-[#777] border-b-[#777] border-l-[#ccc] bg-[#efefef]" />
      </div>
      <div className="ml-[2px] flex gap-[1px]">
        <button aria-label="재생" className={play}><svg className="h-3 w-3" viewBox="0 0 12 12"><path d="M4 0l6 6-6 6z" /></svg></button>
        <button aria-label="뒤로" className={play}><svg className="h-3 w-3" viewBox="0 0 12 12"><path d="M6 1v10L0 6zM12 1v10L6 6z" /></svg></button>
        <button aria-label="정지" className={play}><svg className="h-3 w-3" viewBox="0 0 12 12"><path d="M1 1h10v10H1z" /></svg></button>
        <button aria-label="앞으로" className={play}><svg className="h-3 w-3" viewBox="0 0 12 12"><path d="M0 1v10l6-5zM6 1v10l6-5z" /></svg></button>
      </div>
      <div className="ml-[7px] flex w-[104px] flex-col">
        <input
          type="range"
          aria-label="속도"
          min={0}
          max={100}
          defaultValue={23}
          className="h-4 w-full appearance-none bg-transparent [&::-webkit-slider-runnable-track]:h-[3px] [&::-webkit-slider-runnable-track]:bg-[#777] [&::-webkit-slider-thumb]:-mt-[6px] [&::-webkit-slider-thumb]:h-4 [&::-webkit-slider-thumb]:w-[6px] [&::-webkit-slider-thumb]:appearance-none [&::-webkit-slider-thumb]:border [&::-webkit-slider-thumb]:border-[#888] [&::-webkit-slider-thumb]:bg-[#eee]"
        />
        <div className="mt-[4px] flex justify-between px-[3px]">
          {Array.from({ length: 11 }, (_, i) => <i key={i} className="h-[5px] w-[1px] bg-black" />)}
        </div>
      </div>
      <div className="ml-[10px] flex h-full w-[328px] items-center justify-between">
        {tools.map((t) => (
          <button key={t.name} aria-label={t.name} className={`flex h-full w-5 items-center justify-center ${t.active ? 'bg-white' : ''}`}>
            <svg className="h-5 w-5" viewBox="0 0 20 20" fill="none">{t.art}</svg>
          </button>
        ))}
        <button className="w-5 text-[20px] leading-none font-black text-[#666]">A</button>
      </div>
    </div>
  );
}

export default function App() {
  return (
    <div className="min-h-screen w-full overflow-hidden bg-[#e6ebf3] text-black [font-family:Roboto,'Noto_Sans_CJK_KR',sans-serif]">
      <TopRow />
      <SecondRow />
      <InfoRow />
      <Chart />
      <BottomBar />
    </div>
  );
}
